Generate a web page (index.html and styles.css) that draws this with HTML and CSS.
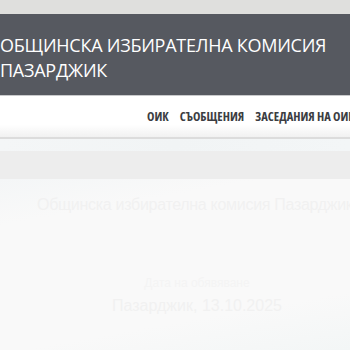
FILE: index.html
```html
<!DOCTYPE html>
<html lang="bg">
<head>
    <meta charset="UTF-8">
    <title>ОИК Пазарджик</title>
    <link rel="stylesheet" href="styles.css">
</head>
<body>
    <div class="top-strip"></div>

    <div class="header">
        <h1>ОБЩИНСКА ИЗБИРАТЕЛНА КОМИСИЯ<br>ПАЗАРДЖИК</h1>
    </div>

    <div class="nav">
        <a href="#">ОИК</a>
        <a href="#">СЪОБЩЕНИЯ</a>
        <a href="#">ЗАСЕДАНИЯ НА ОИК</a>
    </div>

    <div class="sub-band"></div>
    <div class="grey-band"></div>

    <div class="content">
        <p class="doc-title">Общинска избирателна комисия Пазарджик</p>
        <p class="doc-label">Дата на обявяване</p>
        <p class="doc-date">Пазарджик, 13.10.2025</p>
    </div>
</body>
</html>
```

FILE: styles.css
```css
body {
    margin: 0;
    width: 350px;
    height: 350px;
    overflow: hidden;
    background: #f9f9f9;
    font-family: 'Liberation Sans', Arial, sans-serif;
}

.top-strip {
    height: 14px;
    background: #dfdfdd;
}

.header {
    background: #565960;
    padding: 19px 0 12px 0;
    border-bottom: 1px solid #c9cacc;
}

.header h1 {
    margin: 0;
    color: #ffffff;
    font-family: 'Open Sans', 'DejaVu Sans', sans-serif;
    font-weight: normal;
    font-size: 18px;
    letter-spacing: -0.25px;
    line-height: 25px;
    white-space: nowrap;
}

.nav {
    display: flex;
    gap: 11px;
    height: 41px;
    align-items: center;
    padding-left: 147px;
    white-space: nowrap;
    overflow: hidden;
    background: linear-gradient(#ffffff 0%, #ffffff 70%, #f1f1f1 100%);
    border-bottom: 2px solid #dcdcdc;
}

.nav a {
    color: #3b3d42;
    text-decoration: none;
    font-family: 'Open Sans', 'DejaVu Sans Condensed', sans-serif;
    font-stretch: 75%;
    font-weight: bold;
    font-size: 12.5px;
    flex-shrink: 0;
}

.sub-band {
    height: 12px;
    background: linear-gradient(90deg, #f4f6f7, #f1f4f5 50%, #f3f6f7);
}

.grey-band {
    height: 28px;
    background: #ededed;
}

.content {
    padding-top: 17px;
    background: linear-gradient(170deg, #f4f6f7 0%, #f9f9f9 20%, #f9f9f9 75%, #f3f6f6 100%);
    height: 154px;
    overflow: hidden;
}

.content p {
    margin: 0;
    color: #f1f1f1;
}

.doc-title {
    padding-left: 37px;
    font-size: 16px;
    letter-spacing: -0.3px;
    white-space: nowrap;
}

.content .doc-label {
    margin-top: 62px;
    text-align: center;
    padding-left: 44px;
    font-size: 12px;
    color: #f4f4f4;
}

.content .doc-date {
    margin-top: 7px;
    text-align: center;
    padding-left: 44px;
    font-size: 16px;
}
```
